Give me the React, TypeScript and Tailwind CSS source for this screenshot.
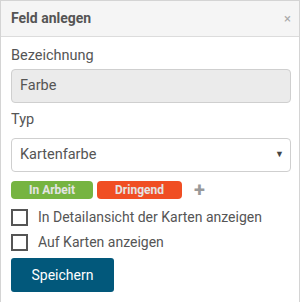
import React from "react";

const font = { fontFamily: "Roboto, 'Liberation Sans', sans-serif" };

export default function App() {
  return (
    <div className="w-[301px] h-[302px] bg-white" style={font}>
      <div className="w-[300px] h-[302px] border border-[#d4d4d4] border-b-0 flex flex-col">
        <div className="h-[36px] bg-[#f5f5f5] border-b border-[#dcdcdc] flex items-center justify-between pl-[10px] pr-[8px]">
          <span className="text-[14px] font-bold text-[#555]">Feld anlegen</span>
          <span className="text-[13px] leading-none text-[#aaa]">×</span>
        </div>
        <div className="px-[10px] pt-[8px] flex flex-col">
          <label className="text-[14.5px] text-[#555] leading-[22px]">Bezeichnung</label>
          <div className="mt-[2px] h-[34px] w-[280px] rounded-[4px] border border-[#cfcfcf] bg-[#ebebeb] flex items-center px-[8px] text-[14.5px] text-[#555]">
            Farbe
          </div>
          <label className="mt-[6px] text-[14.5px] text-[#555] leading-[22px]">Typ</label>
          <div className="mt-[7px] h-[34px] w-[280px] rounded-[4px] border border-[#cfcfcf] bg-white flex items-center justify-between pl-[8px] pr-[6px] text-[14.5px] text-[#555]">
            <span>Kartenfarbe</span>
            <span className="text-[9px] text-[#444]">▼</span>
          </div>
          <div className="mt-[8px] flex items-center gap-[4px]">
            <span className="h-[18px] w-[82px] rounded-[4px] bg-[#76b441] flex items-center justify-center text-[12px] font-bold text-[#e4e4e4]">
              In Arbeit
            </span>
            <span className="h-[18px] w-[85px] rounded-[4px] bg-[#f04e23] flex items-center justify-center text-[12px] font-bold text-[#e4e4e4]">
              Dringend
            </span>
            <span className="ml-[8px] text-[20px] leading-none font-bold text-[#999]">+</span>
          </div>
          <div className="mt-[9px] flex flex-col gap-[8px]">
            <label className="flex items-center gap-[10px] text-[14px] text-[#555] leading-[17px]">
              <span className="w-[17px] h-[17px] border-2 border-[#555] bg-white"></span>
              In Detailansicht der Karten anzeigen
            </label>
            <label className="flex items-center gap-[10px] text-[14px] text-[#555] leading-[17px]">
              <span className="w-[17px] h-[17px] border-2 border-[#555] bg-white"></span>
              Auf Karten anzeigen
            </label>
          </div>
          <button className="mt-[7px] h-[34px] w-[103px] rounded-[3px] bg-[#02587b] text-white text-[14px]">
            Speichern
          </button>
        </div>
      </div>
    </div>
  );
}
